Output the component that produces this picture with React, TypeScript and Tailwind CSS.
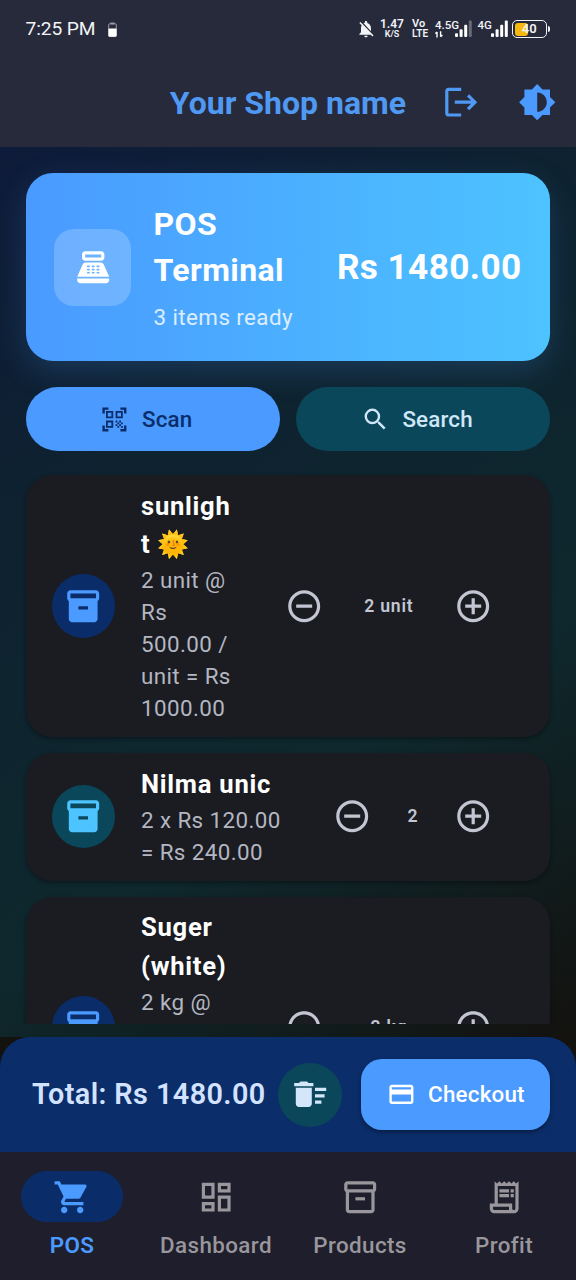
import type { ReactNode } from "react";
import {
  MdAddCircleOutline,
  MdBrightness6,
  MdCreditCard,
  MdDeleteSweep,
  MdInventory2,
  MdLogout,
  MdNotificationsOff,
  MdOutlineDashboard,
  MdOutlineInventory2,
  MdOutlineReceiptLong,
  MdPointOfSale,
  MdQrCodeScanner,
  MdRemoveCircleOutline,
  MdSearch,
  MdShoppingCart,
} from "react-icons/md";

type Item = {
  name: string;
  detail: string;
  count: string;
  countClass: string;
  avatarClass: string;
};

const items: Item[] = [
  {
    name: "sunlight 🌞",
    detail: "2 unit @ Rs 500.00 / unit = Rs 1000.00",
    count: "2 unit",
    countClass: "w-[92.8px]",
    avatarClass: "bg-[#0a2d6a] text-[#4a9aff]",
  },
  {
    name: "Nilma unic",
    detail: "2 x Rs 120.00 = Rs 240.00",
    count: "2",
    countClass: "w-[44.8px]",
    avatarClass: "bg-[#0b475b] text-[#4dc3ff]",
  },
  {
    name: "Suger (white)",
    detail: "2 kg @ Rs 120.00 / kg = Rs 240.00",
    count: "2 kg",
    countClass: "w-[92.8px]",
    avatarClass: "bg-[#0a2d6a] text-[#4a9aff]",
  },
];

function SignalBars({ faded }: { faded?: boolean }) {
  return (
    <svg width="17" height="18" viewBox="0 0 17 18" fill="#fff">
      <rect x="0" y="13.2" width="3" height="3.8" rx="1" />
      <rect x="4.6" y="9.2" width="3" height="7.8" rx="1" />
      <rect x="9.2" y="4.7" width="3" height="12.3" rx="1" />
      <rect x="13.8" y="0.5" width="3" height="16.5" rx="1" fillOpacity={faded ? 0.3 : 1} />
    </svg>
  );
}

function StatusBar() {
  return (
    <div className="flex h-[58px] items-center pl-[25.6px] pr-[25px] text-[#f2f3f7]">
      <span className="text-[19.2px] leading-none tracking-[-0.1px]">7:25 PM</span>
      <svg className="ml-[12.5px]" width="9" height="15" viewBox="0 0 9 15">
        <rect x="2.5" y="0.5" width="4" height="2" fill="#9a9ba6" />
        <rect x="0.7" y="1.7" width="7.6" height="12.6" rx="1.2" fill="none" stroke="#9a9ba6" strokeWidth="1" />
        <rect x="0.4" y="6.4" width="8.2" height="8.3" rx="1" fill="#fff" />
      </svg>
      <div className="ml-auto flex items-center">
        <MdNotificationsOff className="h-5 w-5" />
        <div className="ml-[4px] flex w-[24px] flex-col items-center font-semibold leading-none">
          <span className="text-[12px] leading-[11px]">1.47</span>
          <span className="text-[9px] leading-[9px]">K/S</span>
        </div>
        <div className="ml-[8px] flex w-[18px] flex-col font-semibold leading-none">
          <span className="text-[11px] leading-[10px]">Vo</span>
          <span className="text-[10px] leading-[10px]">LTE</span>
        </div>
        <div className="ml-[5px] flex h-[19px] w-[19.5px] flex-col font-medium">
          <span className="text-[11.5px] leading-[10px]">4.5G</span>
          <svg className="mt-[1.5px]" width="8" height="7" viewBox="0 0 8 7" fill="none" stroke="#fff" strokeWidth="1.4">
            <path d="M2 6.6V1M.3 2.6 2 .9M5.6.2v5.6M5.6 5.8l1.8-1.8" />
          </svg>
        </div>
        <SignalBars faded />
        <div className="ml-[6px] flex h-[19px] w-[13px] font-medium">
          <span className="text-[11.5px] leading-[10px]">4G</span>
        </div>
        <SignalBars />
        <div className="relative ml-[4.5px] flex h-[18px] w-[34.5px] items-center rounded-[5px] border-[1.6px] border-[#f2f3f7] p-[1.5px]">
          <div className="h-full w-[13px] rounded-[3px] bg-[#f6b90f]" />
          <span className="absolute inset-0 text-center text-[13px] font-semibold leading-[15px]">40</span>
        </div>
        <div className="ml-[1px] mr-[1.5px] h-[6px] w-[2px] rounded-r bg-[#f2f3f7]" />
      </div>
    </div>
  );
}

function AppBar() {
  return (
    <header className="h-[147px] shrink-0 bg-[#272a3b]">
      <StatusBar />
      <div className="flex h-[89px] items-center justify-end text-[#4f99f3]">
        <h1 className="mr-[16.4px] text-[32px] font-bold leading-none">Your Shop name</h1>
        <button className="flex w-[76.8px] justify-center">
          <MdLogout className="h-[38.4px] w-[38.4px]" />
        </button>
        <button className="flex w-[76.8px] justify-center text-[#4a9aff]">
          <MdBrightness6 className="h-[38.4px] w-[38.4px]" />
        </button>
      </div>
    </header>
  );
}

function Hero() {
  return (
    <section className="flex h-[188.4px] shrink-0 items-center rounded-[27px] bg-gradient-to-r from-[#4a9aff] to-[#4dc3ff] px-[28.8px] text-white shadow-[0_10px_32px_rgba(74,154,255,0.2)]">
      <div className="flex h-[76.8px] w-[76.8px] items-center justify-center rounded-[20px] bg-white/20">
        <MdPointOfSale className="h-[38.4px] w-[38.4px]" />
      </div>
      <div className="ml-[22.4px] flex-1 tracking-[0.4px]">
        <h2 className="-mt-px w-[150px] text-[32px] font-bold leading-[46.6px]">POS Terminal</h2>
        <p className="mt-[7px] text-[22.4px] leading-8 text-white/80">3 items ready</p>
      </div>
      <div className="text-[35.2px] font-bold tracking-[0.4px]">Rs 1480.00</div>
    </section>
  );
}

function ActionButton({ icon, label, className }: { icon: ReactNode; label: string; className: string }) {
  return (
    <button
      className={
        "flex h-16 flex-1 items-center justify-center gap-[12.8px] rounded-full pl-[25.6px] pr-[38.4px] text-[22.4px] font-medium tracking-[0.16px] " +
        className
      }
    >
      {icon}
      <span className="pt-[1.5px]">{label}</span>
    </button>
  );
}

function CartItem({ item }: { item: Item }) {
  return (
    <li className="flex shrink-0 items-center rounded-[26px] bg-[#1a1c21] pb-[12.9px] pl-[26px] pr-[38.4px] pt-[11.7px] shadow-[0_2px_4px_rgba(0,0,0,0.35)]">
      <div className={"mt-[0.8px] flex h-[63.4px] w-[63.4px] shrink-0 items-center justify-center rounded-full " + item.avatarClass}>
        <MdInventory2 className="h-[38.4px] w-[38.4px]" />
      </div>
      <div className="ml-[26px] mr-[31px] min-w-0 flex-1">
        <div className="break-words text-[25.6px] font-bold leading-[38.4px] tracking-[0.75px] text-white">{item.name}</div>
        <div className="mt-[0.4px] text-[22.4px] leading-8 tracking-[0.4px] text-[#b4b6c2]">{item.detail}</div>
      </div>
      <div className="flex shrink-0 items-center pt-[0.8px] text-[#c3c6d2]">
        <button className="flex w-[76.8px] justify-center">
          <MdRemoveCircleOutline className="h-[38.4px] w-[38.4px]" />
        </button>
        <span className={"text-center text-[17.6px] font-semibold tracking-[0.8px] " + item.countClass}>{item.count}</span>
        <button className="flex w-[76.8px] justify-center">
          <MdAddCircleOutline className="h-[38.4px] w-[38.4px]" />
        </button>
      </div>
    </li>
  );
}

function TotalBar() {
  return (
    <section className="flex h-[115px] shrink-0 items-center rounded-t-[30px] bg-[#0b2d6a] pl-8 pr-[25.6px]">
      <div className="flex-1 whitespace-nowrap text-[28.8px] font-semibold tracking-[0.42px] text-[#d3e3ff]">Total: Rs 1480.00</div>
      <button className="flex h-16 w-16 items-center justify-center rounded-full bg-[#0b475b] text-[#d3e6fa]">
        <MdDeleteSweep className="h-[38.4px] w-[38.4px]" />
      </button>
      <button className="ml-[19.2px] flex h-[70.4px] w-[189.5px] items-center gap-[12.8px] rounded-[21px] bg-[#4a9aff] pl-[25.6px] text-[22.4px] font-medium tracking-[0.2px] text-white shadow-[0_2px_4px_rgba(0,0,0,0.4)]">
        <MdCreditCard className="h-[28.8px] w-[28.8px]" />
        <span className="pt-px">Checkout</span>
      </button>
    </section>
  );
}

function NavItem({ icon, label, active }: { icon: ReactNode; label: string; active?: boolean }) {
  return (
    <button className={"flex flex-1 flex-col items-center pt-[19.2px] " + (active ? "text-[#4a9aff]" : "text-[#99979c]")}>
      <span className={"flex h-[51.2px] w-[102.4px] items-center justify-center rounded-full " + (active ? "bg-[#0a2d6a]" : "")}>
        {icon}
      </span>
      <span className={"mt-[6.4px] text-[22.4px] leading-8 tracking-[0.4px] " + (active ? "font-semibold" : "font-medium")}>{label}</span>
    </button>
  );
}

export default function App() {
  return (
    <div className="flex h-[1280px] w-[576px] flex-col overflow-hidden bg-[#13120f] font-['Roboto','Noto_Color_Emoji',sans-serif]">
      <AppBar />
      <main className="flex h-[890px] shrink-0 flex-col bg-[linear-gradient(147deg,#0e1b3a_0%,#0e2230_30%,#0e282d_66%,#13120f_100%)] px-[25.6px] pb-[13px] pt-[26px]">
        <Hero />
        <div className="mt-[25.6px] flex shrink-0 gap-4">
          <ActionButton
            icon={<MdQrCodeScanner className="h-[28.8px] w-[28.8px]" />}
            label="Scan"
            className="bg-[#4a9aff] text-[#0a2d6a]"
          />
          <ActionButton
            icon={<MdSearch className="h-[28.8px] w-[28.8px]" />}
            label="Search"
            className="bg-[#0b475b] text-[#cfe7f8]"
          />
        </div>
        <ul className="-mx-[25.6px] mt-[16px] flex min-h-0 flex-1 flex-col gap-[16.2px] overflow-hidden px-[25.6px] pt-[8.2px]">
          {items.map((item) => (
            <CartItem key={item.name} item={item} />
          ))}
        </ul>
      </main>
      <TotalBar />
      <nav className="flex flex-1 bg-[#1f1e2c]">
        <NavItem active label="POS" icon={<MdShoppingCart className="h-[38.4px] w-[38.4px]" />} />
        <NavItem label="Dashboard" icon={<MdOutlineDashboard className="h-[38.4px] w-[38.4px]" />} />
        <NavItem label="Products" icon={<MdOutlineInventory2 className="h-[38.4px] w-[38.4px]" />} />
        <NavItem label="Profit" icon={<MdOutlineReceiptLong className="h-[38.4px] w-[38.4px]" />} />
      </nav>
    </div>
  );
}
